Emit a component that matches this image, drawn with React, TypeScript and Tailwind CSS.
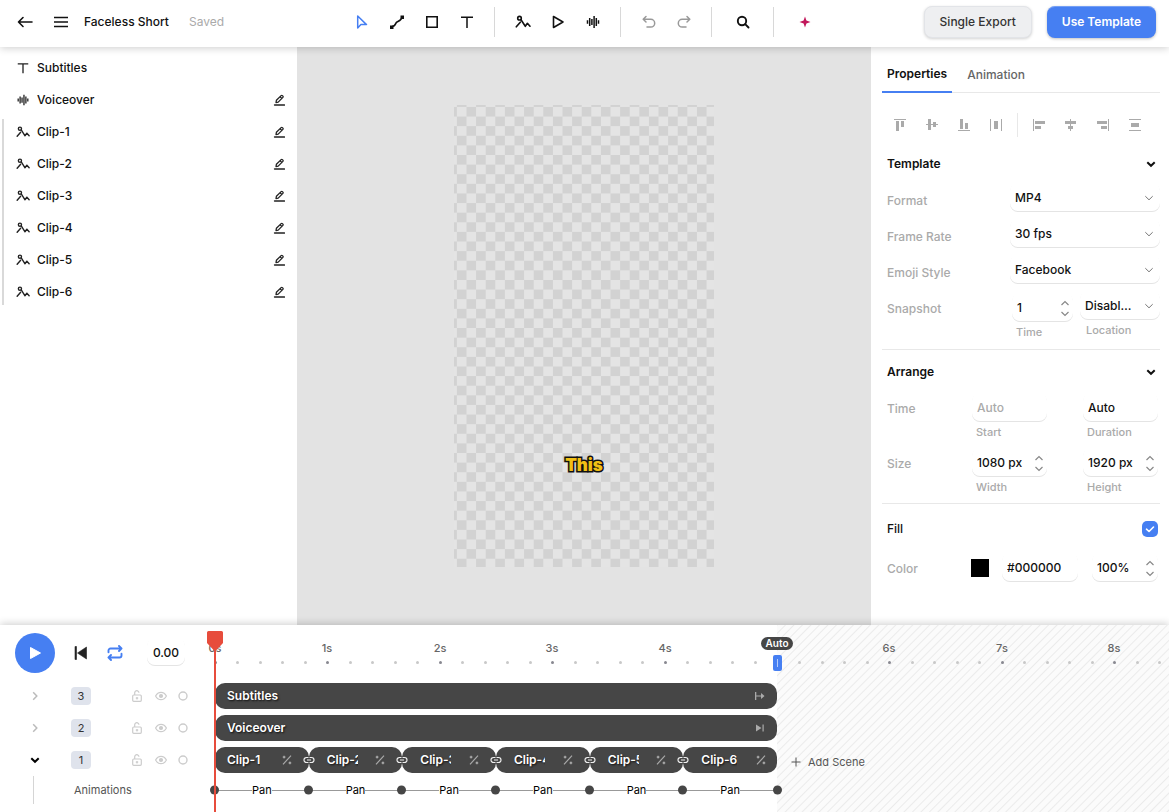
import React from "react";

type IconProps = { className?: string };

const stroke = {
  fill: "none",
  stroke: "currentColor",
  strokeLinecap: "round" as const,
  strokeLinejoin: "round" as const,
};

function ArrowLeft() {
  return (
    <svg className="size-4" viewBox="0 0 16 16" {...stroke} strokeWidth="1.6">
      <path d="M15 8H1.5M6 3.5 1.5 8 6 12.5" />
    </svg>
  );
}
function Burger() {
  return (
    <svg className="size-4" viewBox="0 0 16 16" fill="none" stroke="currentColor" strokeWidth="1.3">
      <path d="M1 3.5h14M1 8h14M1 12.5h14" />
    </svg>
  );
}
function Cursor() {
  return (
    <svg className="size-4" viewBox="0 0 16 16" {...stroke} strokeWidth="1.5">
      <path d="M3.7 2v12l3.2-3.4h5.6z" />
    </svg>
  );
}
function Bezier() {
  return (
    <svg className="size-4" viewBox="0 0 16 16" fill="none" stroke="currentColor" strokeWidth="1.6">
      <path d="M3 12.5c4 0 3-3.500 5-4.500s4.500-1.500 5-5" />
      <path d="M1 11.500h3.500V15H1zM11.500 1.500H15V5h-3.500z" fill="currentColor" stroke="none" />
    </svg>
  );
}
function Square() {
  return (
    <svg className="size-4" viewBox="0 0 16 16" fill="none" stroke="currentColor" strokeWidth="1.6">
      <path d="M2.8 2.8h10.4v10.4H2.8z" />
    </svg>
  );
}
function TextT({ className = "size-4" }: IconProps) {
  return (
    <svg className={className} viewBox="0 0 16 16" fill="none" stroke="currentColor" strokeWidth="1.5">
      <path d="M2 3.2h12M8 3.2V14" />
    </svg>
  );
}
function Picture({ className = "size-4" }: IconProps) {
  return (
    <svg className={className} viewBox="0 0 16 16" {...stroke} strokeWidth="1.6">
      <circle cx="4.5" cy="4.2" r="1.8" />
      <path d="m1.300 12.800 4-4.600" />
      <path d="M6 5.700 10.300 12.300 12.400 9.300 15 12.200" />
    </svg>
  );
}
function PlayOutline() {
  return (
    <svg className="size-4" viewBox="0 0 16 16" {...stroke} strokeWidth="1.6">
      <path d="M3.500 2.500v11l9.500-5.500z" />
    </svg>
  );
}
function Wave({ className = "size-4" }: IconProps) {
  return (
    <svg className={className} viewBox="0 0 16 16" fill="none" stroke="currentColor" strokeWidth="1.5">
      <path d="M2.500 6.300v3.400M4.700 4v8M6.900 5v6M9.100 2v12M11.300 4v8M13.500 6.300v3.400" />
    </svg>
  );
}
function Undo({ className = "size-4" }: IconProps) {
  return (
    <svg className={className} viewBox="0 0 16 16" {...stroke} strokeWidth="1.5">
      <path d="M5 2.500 2.200 5.300 5 8M2.500 5.300h7.300a3.900 3.900 0 0 1 0 7.800H6" />
    </svg>
  );
}
function Search() {
  return (
    <svg className="size-4" viewBox="0 0 16 16" {...stroke} strokeWidth="1.9">
      <circle cx="7" cy="7" r="4.200" />
      <path d="m10.200 10.200 3.300 3.300" />
    </svg>
  );
}
function Spark() {
  return (
    <svg className="size-4" viewBox="0 0 16 16" fill="#c2185b">
      <path d="M8 2.500 9.400 6.600 13.500 8 9.400 9.400 8 13.500 6.600 9.400 2.500 8 6.600 6.600z" />
    </svg>
  );
}
function Pencil() {
  return (
    <svg className="size-3" viewBox="0 0 12 12" {...stroke} strokeWidth="1.3">
      <path d="M3 8.500 3.400 6.300 8.100 1.600a.9.900 0 0 1 1.300 0l.5.5a.9.900 0 0 1 0 1.300L5.200 8.100zM7.100 2.800l1.700 1.700" />
      <path d="M1.500 11h10" />
    </svg>
  );
}
function ChevronDown({ className = "" }: IconProps) {
  return (
    <svg className={`size-2.5 ${className}`} viewBox="0 0 10 10" fill="none" stroke="currentColor">
      <path d="m1.300 3.200 3.700 3.600 3.700-3.600" />
    </svg>
  );
}
function Stepper() {
  return (
    <span className="flex flex-col items-center gap-[3px] text-[#888]">
      <button type="button" aria-label="Increase" className="block">
        <svg className="h-[7px] w-2.5" viewBox="0 0 10 7" fill="none" stroke="currentColor" strokeWidth="1.2">
          <path d="m1.500 5 3.500-3.500L8.500 5" />
        </svg>
      </button>
      <button type="button" aria-label="Decrease" className="block">
        <svg className="h-[7px] w-2.5" viewBox="0 0 10 7" fill="none" stroke="currentColor" strokeWidth="1.2">
          <path d="M1.500 2 5 5.500 8.500 2" />
        </svg>
      </button>
    </span>
  );
}

function Tool({ label, className = "text-[#111]", children }: { label: string; className?: string; children: React.ReactNode }) {
  return (
    <button type="button" aria-label={label} className={`flex h-8 w-[35px] items-center justify-center ${className}`}>
      {children}
    </button>
  );
}
function ToolDivider() {
  return <span className="mx-2.5 h-[30px] w-px bg-[#d8d8d8]" />;
}

function Header() {
  return (
    <header className="relative z-20 flex h-[47px] shrink-0 items-center bg-white pr-2.5 pb-[3px] shadow-[0_1px_8px_rgba(0,0,0,0.2)]">
      <div className="flex flex-1 items-center pl-[17px]">
        <button type="button" aria-label="Back"><ArrowLeft /></button>
        <button type="button" aria-label="Menu" className="ml-5"><Burger /></button>
        <h1 className="ml-[15px] font-medium">Faceless Short</h1>
        <span className="ml-5 text-[#aaa]">Saved</span>
      </div>
      <div className="mr-1 flex items-center">
        <Tool label="Select" className="text-[#467ff2]"><Cursor /></Tool>
        <Tool label="Path"><Bezier /></Tool>
        <Tool label="Rectangle"><Square /></Tool>
        <Tool label="Text"><TextT /></Tool>
        <ToolDivider />
        <Tool label="Image"><Picture /></Tool>
        <Tool label="Video"><PlayOutline /></Tool>
        <Tool label="Audio"><Wave /></Tool>
        <ToolDivider />
        <Tool label="Undo" className="text-[#999]"><Undo /></Tool>
        <Tool label="Redo" className="text-[#999]"><Undo className="size-4 -scale-x-100" /></Tool>
        <ToolDivider />
        <div className="px-[3px]"><Tool label="Search"><Search /></Tool></div>
        <ToolDivider />
        <div className="px-[3px]"><Tool label="Generate"><Spark /></Tool></div>
      </div>
      <div className="flex flex-1 items-center justify-end gap-[15px] pr-[3px]">
        <button type="button" className="h-8 rounded-lg border border-[#e2e4e8] bg-[#eeeff1] px-[15px] font-medium whitespace-nowrap text-[#333] shadow-[0_1px_3px_rgba(0,0,0,0.18)]">
          Single Export
        </button>
        <button type="button" className="h-8 rounded-lg bg-[#467ff2] px-[15px] font-semibold whitespace-nowrap text-white shadow-[0_1px_3px_rgba(0,0,0,0.25),inset_0_2px_0_-1px_rgba(255,255,255,0.25)]">
          Use Template
        </button>
      </div>
    </header>
  );
}

function LayerRow({ name, icon, editable = true }: { name: string; icon: React.ReactNode; editable?: boolean }) {
  return (
    <li className="flex h-8 items-center pr-3">
      <span className="text-[#222]">{icon}</span>
      <span className="ml-[7px] flex-1 font-medium">{name}</span>
      {editable && (
        <button type="button" aria-label={`Rename ${name}`} className="text-[#222]"><Pencil /></button>
      )}
    </li>
  );
}

const clips = ["Clip-1", "Clip-2", "Clip-3", "Clip-4", "Clip-5", "Clip-6"];

function Layers() {
  return (
    <aside className="w-[297px] shrink-0 bg-white pt-[5px]">
      <ul className="pl-4">
        <LayerRow name="Subtitles" icon={<TextT className="size-3.5" />} editable={false} />
        <LayerRow name="Voiceover" icon={<Wave className="size-3.5" />} />
      </ul>
      <div className="flex pl-0.5">
        <span className="my-[3px] w-0.5 bg-[#d9d9d9]" />
        <ul className="flex-1 pl-3">
          {clips.map((c) => (
            <LayerRow key={c} name={c} icon={<Picture className="size-3.5" />} />
          ))}
        </ul>
      </div>
    </aside>
  );
}

function Stage() {
  return (
    <main className="flex min-w-0 flex-1 items-center justify-center bg-[#e3e3e3]">
      <div className="relative aspect-[260/462] h-4/5">
        <svg className="block size-full" viewBox="0 0 271 481" preserveAspectRatio="none">
          <defs>
            <pattern id="checker" x="3" y="2" width="20" height="20" patternUnits="userSpaceOnUse">
              <rect width="20" height="20" fill="#e4e4e4" />
              <rect x="10" width="10" height="10" fill="#d2d2d2" />
              <rect y="10" width="10" height="10" fill="#d2d2d2" />
            </pattern>
          </defs>
          <rect width="271" height="481" fill="url(#checker)" />
        </svg>
        <p className="absolute inset-x-0 top-[78%] -translate-y-1/2 text-center font-['Inter',sans-serif] text-[17px] leading-6 font-black text-[#f2c014] [-webkit-text-stroke:3px_#111] [paint-order:stroke_fill]">
          This
        </p>
      </div>
    </main>
  );
}

const field = "rounded-lg bg-white shadow-[inset_0_-1px_0_#e4e4e4]";

function SelectField({ id, label, value, className }: { id: string; label?: string; value: string; className: string }) {
  return (
    <div className={`relative mt-px flex h-7 items-center ${field} ${className}`}>
      <select
        id={id}
        aria-label={label}
        defaultValue={value}
        className="size-full appearance-none overflow-hidden bg-transparent pr-7 pl-[5px] font-medium text-ellipsis outline-none"
      >
        <option>{value}</option>
      </select>
      <ChevronDown className="pointer-events-none absolute right-1.5 text-[#777]" />
    </div>
  );
}

function InputField({ id, label, value, placeholder, step, className = "w-[75px]" }: { id: string; label?: string; value?: string; placeholder?: string; step?: boolean; className?: string }) {
  return (
    <div className={`mt-[3px] flex h-7 items-center pr-[3px] ${field} ${className}`}>
      <input
        id={id}
        aria-label={label}
        defaultValue={value}
        placeholder={placeholder}
        className="w-full min-w-0 flex-1 bg-transparent pl-[5px] font-medium outline-none placeholder:text-[#aaa]"
      />
      {step && <Stepper />}
    </div>
  );
}

function Caption({ htmlFor, children }: { htmlFor: string; children: React.ReactNode }) {
  return <label htmlFor={htmlFor} className="block h-5 pl-1 text-[11px] leading-5 font-medium text-[#aaa]">{children}</label>;
}

function RowLabel({ htmlFor, children }: { htmlFor?: string; children: React.ReactNode }) {
  return <label htmlFor={htmlFor} className="mr-auto pl-[5px] leading-9 font-medium text-[#aaa]">{children}</label>;
}

function SectionTitle({ children }: { children: React.ReactNode }) {
  return (
    <button type="button" className="mb-[5px] flex h-7 w-full items-center justify-between pr-1 pl-[5px]">
      <span className="font-semibold">{children}</span>
      <ChevronDown className="stroke-2" />
    </button>
  );
}

const alignIcons: { name: string; d: string }[] = [
  { name: "Align top", d: "M0 0h12v1H0zM2 2h3v10H2zM7 2h3v6H7z" },
  { name: "Align middle", d: "M0 5h12v1H0zM2 0h3v11H2zM7 3h3v5H7z" },
  { name: "Align bottom", d: "M0 11h12v1H0zM2 0h3v10H2zM7 4h3v6H7z" },
  { name: "Distribute horizontally", d: "M0 0h1v12H0zM11 0h1v12h-1zM4 2h4v8H4z" },
  { name: "Align left", d: "M0 0h1v12H0zM2 2h10v3H2zM2 7h6v3H2z" },
  { name: "Align center", d: "M5 0h1v12H5zM0 2h11v3H0zM3 7h5v3H3z" },
  { name: "Align right", d: "M11 0h1v12h-1zM0 2h10v3H0zM4 7h6v3H4z" },
  { name: "Distribute vertically", d: "M0 0h12v1H0zM0 11h12v1H0zM2 4h8v4H2z" },
];

function AlignButton({ icon }: { icon: { name: string; d: string } }) {
  return (
    <button type="button" aria-label={icon.name} className="flex h-6 w-8 items-center justify-center text-[#aaa]">
      <svg className="size-3" viewBox="0 0 12 12" fill="currentColor"><path d={icon.d} /></svg>
    </button>
  );
}

function Properties() {
  return (
    <aside className="w-[298px] shrink-0 bg-white pr-[9px] pl-[11px]">
      <nav className="flex h-[46px] border-b border-[#e8e8e8]">
        <button type="button" className="-mb-px border-b-2 border-[#467ff2] px-[5px] pt-2.5 font-semibold">Properties</button>
        <button type="button" className="px-[15px] pt-2.5 font-medium text-[#666]">Animation</button>
      </nav>
      <div className="mt-5 mb-[13px] flex items-center pl-0.5">
        {alignIcons.slice(0, 4).map((i) => <AlignButton key={i.name} icon={i} />)}
        <span className="mx-[5px] h-6 w-px bg-[#e8e8e8]" />
        {alignIcons.slice(4).map((i) => <AlignButton key={i.name} icon={i} />)}
      </div>

      <section>
        <SectionTitle>Template</SectionTitle>
        <div className="flex h-9 items-start"><RowLabel htmlFor="format">Format</RowLabel><SelectField id="format" value="MP4" className="w-[150px]" /></div>
        <div className="flex h-9 items-start"><RowLabel htmlFor="rate">Frame Rate</RowLabel><SelectField id="rate" value="30 fps" className="w-[150px]" /></div>
        <div className="flex h-9 items-start"><RowLabel htmlFor="emoji">Emoji Style</RowLabel><SelectField id="emoji" value="Facebook" className="w-[150px]" /></div>
        <div className="flex items-start pb-1">
          <RowLabel>Snapshot</RowLabel>
          <div className="mr-[7px]">
            <InputField id="snap-time" value="1" step className="w-[61px]" />
            <Caption htmlFor="snap-time">Time</Caption>
          </div>
          <div>
            <SelectField id="snap-loc" value="Disabled" className="w-20" />
            <div className="pl-0.5"><Caption htmlFor="snap-loc">Location</Caption></div>
          </div>
        </div>
      </section>

      <section className="mt-[3px] border-t border-[#e8e8e8] pt-2">
        <SectionTitle>Arrange</SectionTitle>
        <div className="flex items-start pr-0.5 pb-1">
          <RowLabel>Time</RowLabel>
          <div className="mr-9"><InputField id="start" placeholder="Auto" /><Caption htmlFor="start">Start</Caption></div>
          <div><InputField id="duration" value="Auto" /><Caption htmlFor="duration">Duration</Caption></div>
        </div>
        <div className="flex items-start pr-0.5 pb-1">
          <RowLabel>Size</RowLabel>
          <div className="mr-9"><InputField id="width" value="1080 px" step /><Caption htmlFor="width">Width</Caption></div>
          <div><InputField id="height" value="1920 px" step /><Caption htmlFor="height">Height</Caption></div>
        </div>
      </section>

      <section className="mt-0.5 border-t border-[#e8e8e8] pt-[11px]">
        <div className="mb-2 flex h-7 items-center justify-between pr-0.5 pl-[5px]">
          <label htmlFor="fill" className="font-medium">Fill</label>
          <span className="relative flex size-4">
            <input id="fill" type="checkbox" defaultChecked className="size-4 appearance-none rounded-[5px] bg-[#467ff2]" />
            <svg className="pointer-events-none absolute inset-0 size-4 text-white" viewBox="0 0 16 16" {...stroke} strokeWidth="1.6">
              <path d="m4.500 8.200 2.500 2.300 4.500-4.500" />
            </svg>
          </span>
        </div>
        <div className="flex items-start pr-0.5">
          <RowLabel htmlFor="color">Color</RowLabel>
          <button type="button" aria-label="Pick color" className="mt-2 mr-[13px] size-[18px] bg-black" />
          <div className="mr-3.5"><InputField id="color" value="#000000" className="w-[76px]" /></div>
          <InputField id="opacity" label="Opacity" value="100%" step className="w-[66px]" />
        </div>
      </section>
    </aside>
  );
}

function Lock() {
  return (
    <svg className="h-3 w-2.5" viewBox="0 0 10 12" fill="none" stroke="currentColor" strokeWidth="1.2">
      <rect x=".7" y="5" width="8.600" height="6.300" rx="1" />
      <path d="M2.700 5V2.800a2.100 2.100 0 0 1 4.200 0M5 7v2.500M3.800 8.200h2.400" />
    </svg>
  );
}
function Eye() {
  return (
    <svg className="size-3" viewBox="0 0 12 12" fill="none" stroke="currentColor" strokeWidth="1.2">
      <path d="M.6 6C1.800 3.600 3.700 2.300 6 2.300S10.200 3.600 11.400 6C10.200 8.400 8.300 9.700 6 9.700S1.800 8.400.6 6z" />
      <circle cx="6" cy="6" r="1.500" fill="currentColor" />
    </svg>
  );
}

function TrackControls({ n, open }: { n: number; open?: boolean }) {
  return (
    <div className="flex h-8 items-center text-[#ccc]">
      <button type="button" aria-label={`Toggle track ${n}`} className="ml-[30px]">
        <ChevronDown className={open ? "stroke-2 text-black" : "-rotate-90 stroke-[1.5] text-[#bbb]"} />
      </button>
      <span className="ml-[31px] flex h-[18px] w-5 items-center justify-center rounded bg-[#dfe3ec] text-[11px] text-[#333]">{n}</span>
      <button type="button" aria-label="Lock" className="ml-[41px]"><Lock /></button>
      <button type="button" aria-label="Visibility" className="ml-[13px]"><Eye /></button>
      <button type="button" aria-label="Solo" className="ml-[11px]">
        <svg className="size-2.5" viewBox="0 0 10 10" fill="none" stroke="currentColor" strokeWidth="1.4"><circle cx="5" cy="5" r="4" /></svg>
      </button>
    </div>
  );
}

function TransportPanel() {
  return (
    <div className="w-[215px] shrink-0">
      <div className="flex h-[55px] items-center pl-[15px]">
        <button type="button" aria-label="Play" className="flex size-10 items-center justify-center rounded-full bg-[#467ff2] text-white">
          <svg className="size-4" viewBox="0 0 16 16" fill="currentColor" stroke="currentColor" strokeLinejoin="round"><path d="M3.500 2.500v11l10-5.500z" /></svg>
        </button>
        <button type="button" aria-label="Go to start" className="ml-[18px] text-[#222]">
          <svg className="size-4" viewBox="0 0 16 16" fill="currentColor" stroke="currentColor" strokeWidth=".6" strokeLinejoin="round"><path d="M2 1.500h1.500v13H2zM13.500 2v12L4.500 8z" /></svg>
        </button>
        <button type="button" aria-label="Loop" className="ml-[18px] text-[#467ff2]">
          <svg className="size-4" viewBox="0 0 16 16" {...stroke} strokeWidth="1.9">
            <path d="M1.500 7.200V5.500a2 2 0 0 1 2-2h11M12 1l2.500 2.500L12 6M14.500 8.800v1.700a2 2 0 0 1-2 2h-11M4 10l-2.500 2.500L4 15" />
          </svg>
        </button>
        <input aria-label="Current time" defaultValue="0.00" className={`ml-6 h-[27px] w-[38px] text-center font-medium ${field}`} />
      </div>
      <TrackControls n={3} />
      <TrackControls n={2} />
      <TrackControls n={1} open />
      <div className="flex h-7 items-center pl-[33px]">
        <span className="h-7 w-px bg-[#d5d5d5]" />
        <span className="pl-10 text-[11px] text-[#555]">Animations</span>
      </div>
    </div>
  );
}

const PX_PER_SECOND = 112.4;
const ticks = Array.from({ length: 43 }, (_, i) => i);

function Ruler() {
  return (
    <div className="absolute inset-x-0 top-0 h-[55px]">
      {ticks.map((i) => {
        const major = i % 5 === 0;
        return (
          <span key={i} className="absolute top-[15px] flex w-0 flex-col items-center" style={{ left: Math.round((i * PX_PER_SECOND) / 5) }}>
            <span className="h-4 text-[11px] leading-4 font-medium text-[#666]">{major && i !== 25 ? `${i / 5}s` : ""}</span>
            <span className={`mt-[5px] size-[3px] shrink-0 rounded-full ${major ? "bg-[#888890]" : "bg-[#c8c8c8]"}`} />
          </span>
        );
      })}
    </div>
  );
}

const barText = "font-semibold text-white [text-shadow:1px_1px_2px_rgba(0,0,0,0.8)]";

function Bar({ name, icon }: { name: string; icon: string }) {
  return (
    <div className="flex h-8 items-center">
      <div className="flex h-[26px] w-full items-center justify-between rounded-[10px] bg-[#464646] px-3">
        <span className={barText}>{name}</span>
        <svg className="size-2.5 text-[#aaa]" viewBox="0 0 10 10" fill="currentColor"><path d={icon} /></svg>
      </div>
    </div>
  );
}

function LinkIcon() {
  return (
    <svg className="absolute top-1/2 -right-1.5 z-10 h-2 w-3 -translate-y-1/2" viewBox="0 0 12 8" fill="none">
      <path d="M5.500 1.500h-2a2.500 2.500 0 0 0 0 5h2M6.500 1.500h2a2.500 2.500 0 0 1 0 5h-2M4 4h4" stroke="#464646" strokeWidth="3" />
      <path d="M5.500 1.500h-2a2.500 2.500 0 0 0 0 5h2M6.500 1.500h2a2.500 2.500 0 0 1 0 5h-2M4 4h4" stroke="#eee" strokeWidth="1.2" />
    </svg>
  );
}

function ClipBar({ name, first, last }: { name: string; first: boolean; last: boolean }) {
  return (
    <div className={`relative flex h-[26px] min-w-0 items-center justify-between rounded-[10px] bg-[#464646] ${first ? "pl-3" : "pl-[18px]"} ${last ? "pr-[11px]" : "pr-[17px]"}`}>
      <span className={`overflow-hidden whitespace-nowrap ${first || last ? "" : "w-[31px]"} ${barText}`}>{name}</span>
      <svg className="size-2.5 shrink-0 text-[#aaa]" viewBox="0 0 10 10" fill="none" stroke="currentColor" strokeWidth="1.2">
        <path d="M1 9.300 9 .7" />
        <path d="M1.200 1.200h1.800v1.800H1.200zM7 7h1.800v1.800H7z" fill="currentColor" strokeWidth=".6" />
      </svg>
      {!last && <LinkIcon />}
    </div>
  );
}

function AnimationSegment({ last }: { last: boolean }) {
  return (
    <div className="relative flex items-center justify-center">
      <span className="h-px flex-1 bg-[#999]" />
      <span className="text-[11px] text-black">Pan</span>
      <span className="h-px flex-1 bg-[#999]" />
      <span className="absolute top-1/2 -left-[5px] size-[9px] -translate-y-1/2 rounded-full bg-[#464646]" />
      {last && <span className="absolute top-1/2 -right-[5px] size-[9px] -translate-y-1/2 rounded-full bg-[#464646]" />}
    </div>
  );
}

function Timeline() {
  return (
    <footer className="relative z-10 flex shrink-0 bg-white shadow-[0_-1px_8px_rgba(0,0,0,0.2)]">
      <TransportPanel />
      <div className="relative flex min-w-0 flex-1">
        <div className="w-[562px] shrink-0 pt-[55px] pb-2">
          <Bar name="Subtitles" icon="M0 1h1.300v8H0zM1 4.400h5V2l3.500 3L6 8V5.600H1z" />
          <Bar name="Voiceover" icon="M1 1.500v7L6.500 5zM7.500 1.500h1.200v7H7.500z" />
          <div className="grid h-8 grid-cols-6 items-center">
            {clips.map((c, i) => <ClipBar key={c} name={c} first={i === 0} last={i === 5} />)}
          </div>
          <div className="grid h-7 grid-cols-6 items-center">
            {clips.map((c, i) => <AnimationSegment key={c} last={i === 5} />)}
          </div>
        </div>
        <div className="min-w-0 flex-1 bg-[#fbfbfb] bg-[repeating-linear-gradient(135deg,#ebebeb_0px,#fbfbfb_1px,#fbfbfb_5px,#ebebeb_6px)] pt-[119px]">
          <button type="button" className="flex h-9 items-center gap-[7px] pl-3.5 text-[11px] text-[#555]">
            <svg className="size-2.5" viewBox="0 0 10 10" fill="none" stroke="currentColor"><path d="M5 .5v9M.5 5h9" /></svg>
            Add Scene
          </button>
        </div>
        <Ruler />
        <div className="absolute top-3 left-[562px] flex w-0 flex-col items-center gap-[5px]">
          <span className="h-[13px] rounded-full bg-[#464646] px-[5px] text-[10px] leading-[13px] font-semibold text-white">Auto</span>
          <span className="flex h-4 w-[9px] items-center justify-center rounded-[2px] bg-[#467ff2]"><span className="h-2 w-px bg-[#b5ccfb]" /></span>
        </div>
      </div>
      <svg className="absolute top-1.5 left-[207px] h-5 w-4" viewBox="0 0 16 20" fill="#e74c3c">
        <path d="M1.500 0h13A1.500 1.500 0 0 1 16 1.500V12l-6.500 7h-3L0 12V1.500A1.500 1.500 0 0 1 1.500 0z" />
      </svg>
      <div className="absolute top-5 bottom-0 left-[214px] w-0.5 bg-[#e74c3c]" />
    </footer>
  );
}

export default function App() {
  return (
    <div className="flex h-screen flex-col overflow-hidden bg-white font-['Inter',sans-serif] text-xs text-[#111]">
      <Header />
      <div className="flex min-h-0 flex-1">
        <Layers />
        <Stage />
        <Properties />
      </div>
      <Timeline />
    </div>
  );
}
